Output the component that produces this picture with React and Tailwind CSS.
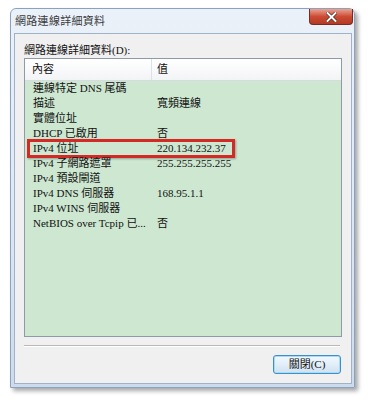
import React from "react";

const rows = [
  ["連線特定 DNS 尾碼", ""],
  ["描述", "寬頻連線"],
  ["實體位址", ""],
  ["DHCP 已啟用", "否"],
  ["IPv4 位址", "220.134.232.37"],
  ["IPv4 子網路遮罩", "255.255.255.255"],
  ["IPv4 預設閘道", ""],
  ["IPv4 DNS 伺服器", "168.95.1.1"],
  ["IPv4 WINS 伺服器", ""],
  ["NetBIOS over Tcpip 已...", "否"],
];

const font = {
  fontFamily: '"Liberation Serif", "Noto Sans CJK TC", serif',
};

const App = () => {
  return (
    <div className="w-[368px] h-[400px] bg-white pt-[8px] pl-[10px]" style={font}>
      <div className="w-[345px] h-[380px] flex flex-col border border-[#8aa2c0] rounded-t-[6px] bg-gradient-to-b from-[#eaf1f9] via-[#dfe9f4] to-[#cddbec] shadow-[3px_3px_4px_rgba(0,0,0,0.35)]">
        {/* title bar */}
        <div className="h-[24px] flex items-start justify-between pl-[4px] pr-[1px]">
          <span className="mt-[5px] text-[11px] leading-[14px] text-[#3a3a3a] tracking-[0.3px]">網路連線詳細資料</span>
          <div className="w-[44px] h-[16px] rounded-b-[4px] border border-t-0 border-[#7a2a22] bg-gradient-to-b from-[#e8a392] via-[#cc4b34] to-[#b33a24] flex items-center justify-center">
            <svg width="11" height="10" viewBox="0 0 11 10">
              <path d="M1.5 1 L9.5 9 M9.5 1 L1.5 9" stroke="#3b1a14" strokeWidth="3.2" strokeLinecap="square" />
              <path d="M1.5 1 L9.5 9 M9.5 1 L1.5 9" stroke="#ffffff" strokeWidth="2" strokeLinecap="square" />
            </svg>
          </div>
        </div>

        {/* client area */}
        <div className="ml-[3px] mr-[2px] mb-[3px] flex-1 bg-[#f0f0f0] border border-[#9fb2c9] flex flex-col px-[9px]">
          <div className="h-[24px] flex items-end text-[11px] leading-[16px] text-[#111]">
            網路連線詳細資料(D):
          </div>
          <div className="h-[279px] border border-[#8e9aa6] bg-[#cde7d0] flex flex-col text-[11px] text-[#111]">
            <div className="h-[22px] flex bg-gradient-to-b from-white to-[#f3f4f6] border-b border-[#d5dbe1]">
              <div className="w-[127px] border-r border-[#dde2e8] pl-[7px] flex items-center">內容</div>
              <div className="pl-[5px] flex items-center">值</div>
            </div>
            <div className="flex flex-col">
              {rows.map(([k, v]) => (
                <div
                  key={k}
                  className={
                    k === "IPv4 位址"
                      ? "h-[19px] flex items-center mx-[2px] -my-[2px] border-[3px] border-[#d42a26] w-[208px] shadow-[1px_1px_2px_rgba(0,0,0,0.3)]"
                      : "h-[15px] flex items-center"
                  }
                >
                  <div className={k === "IPv4 位址" ? "w-[127px] pl-[3px] whitespace-nowrap" : "w-[132px] pl-[8px] whitespace-nowrap"}>{k}</div>
                  <div className="whitespace-nowrap">{v}</div>
                </div>
              ))}
            </div>
          </div>
          <div className="mt-[8px] border-t border-[#b9b9b9] border-b border-b-white mr-[2px]" />
          <div className="flex justify-end mt-[8px] mr-[1px]">
            <div className="w-[68px] h-[19px] rounded-[3px] border border-[#3c8fc9] bg-gradient-to-b from-[#f2f9fe] via-[#e2eef8] to-[#cfe1f0] shadow-[inset_0_0_0_1px_#a8dbf5] flex items-center justify-center text-[11px] text-[#111]">
              關閉(C)
            </div>
          </div>
        </div>
      </div>
    </div>
  );
};

export default App;
